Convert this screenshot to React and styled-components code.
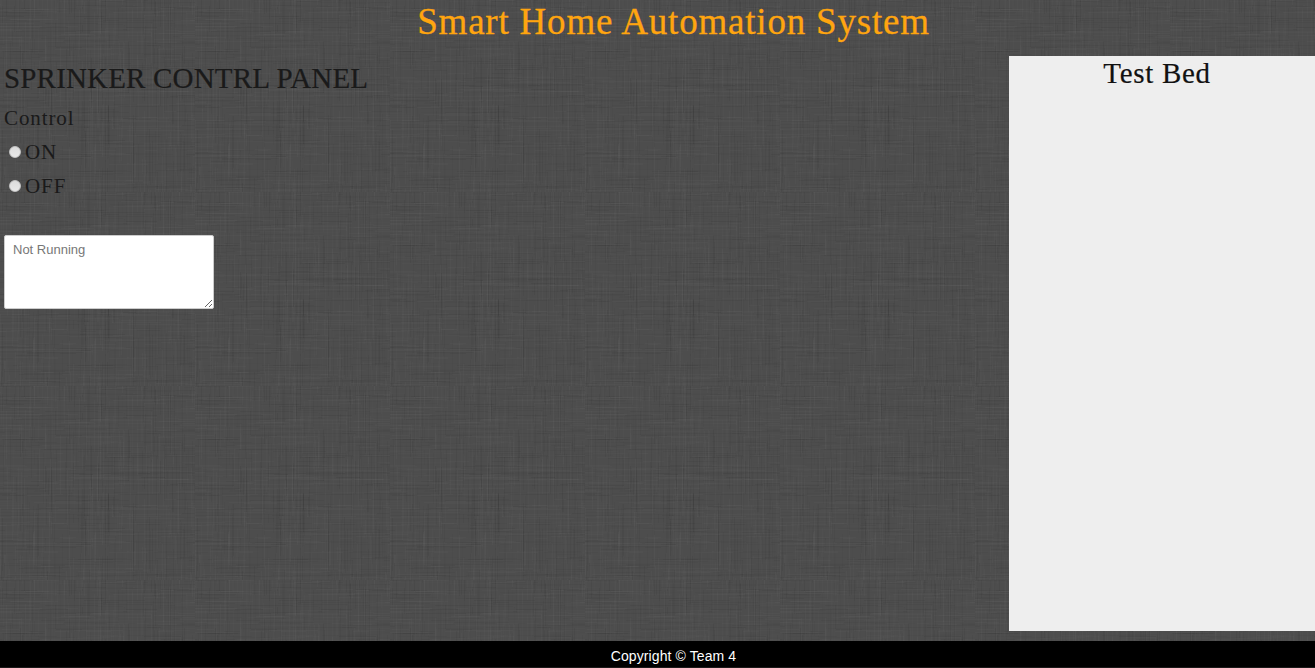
import React from "react";
import styled, { createGlobalStyle } from "styled-components";

const TILE_W = 195;
const TILE_H = 194;

// Woven linen tile: short, faint horizontal and vertical threads.
function linenTile() {
  let seed = 41;
  const rand = () => {
    seed = (seed * 16807) % 2147483647;
    return seed / 2147483647;
  };
  let threads = "";
  for (let i = 0; i < 1500; i += 1) {
    const across = i % 2 === 0;
    const length = 12 + Math.floor(rand() * 50);
    const x = Math.floor(rand() * (TILE_W + (across ? 60 : 0))) - (across ? 60 : 0);
    const y = Math.floor(rand() * (TILE_H + (across ? 0 : 60))) - (across ? 0 : 60);
    const fill = rand() < 0.5 ? "#000" : "#fff";
    const strength = fill === "#000" ? 0.045 : 0.015;
    const opacity = (0.005 + rand() * strength).toFixed(3);
    threads += `<rect x='${x}' y='${y}' width='${across ? length : 1}' height='${across ? 1 : length}' fill='${fill}' opacity='${opacity}'/>`;
  }
  const svg = `<svg xmlns='http://www.w3.org/2000/svg' width='${TILE_W}' height='${TILE_H}'><rect width='${TILE_W}' height='${TILE_H}' fill='#4d4d4d'/>${threads}</svg>`;
  return `url("data:image/svg+xml,${encodeURIComponent(svg)}")`;
}

const GlobalStyle = createGlobalStyle`
  *, *::before, *::after { box-sizing: border-box; }
  body { margin: 0; }
`;

const Page = styled.div`
  height: 668px;
  display: flex;
  flex-direction: column;
  overflow: hidden;
  background-color: #4b4b4b;
  background-image: ${linenTile()};
  background-position: 0 -2px;
  color: #1a1a1a;
  font-family: Georgia, "Liberation Serif", serif;
`;

const Header = styled.header`
  height: 56px;
  padding-left: 32px;
  text-align: center;
`;

const Title = styled.h1`
  margin: 0;
  font-size: 37px;
  font-weight: 400;
  line-height: 43px;
  letter-spacing: 0.8px;
  -webkit-text-stroke: 0.3px currentColor;
  color: #ffa50f;
`;

const Main = styled.main`
  height: 575px;
  display: flex;
  justify-content: space-between;
`;

const ControlPanel = styled.section`
  padding: 4px 0 0 4px;
`;

const PanelTitle = styled.h2`
  margin: 0;
  font-size: 29px;
  font-weight: 400;
  line-height: ${(p) => p.$line};
  letter-spacing: ${(p) => p.$spacing};
  -webkit-text-stroke: 0.2px currentColor;
  white-space: nowrap;
`;

const Controls = styled.fieldset`
  margin: 4px 0 0;
  padding: 0;
  border: 0;
  min-width: 0;
  font-size: 21px;
  line-height: 34px;
`;

const Legend = styled.div`
  letter-spacing: 0.9px;
`;

const Option = styled.label`
  display: flex;
  align-items: center;
  gap: 4px;
  padding-left: 5px;
  letter-spacing: 0.9px;
`;

const Radio = styled.input`
  appearance: none;
  flex: none;
  width: 12px;
  height: 12px;
  margin: 0;
  border: 1px solid #c4c4c4;
  border-radius: 50%;
  background: linear-gradient(#dcdcdc, #e8e8e8);

  &:checked {
    background: radial-gradient(#444 0 3px, #e4e4e4 3.5px);
  }
`;

const Status = styled.textarea`
  display: block;
  width: 210px;
  height: 74px;
  margin-top: 32px;
  padding: 6px 8px;
  border: 1px solid #ccc;
  border-radius: 2px;
  background: #fff;
  font: 13px/16px "Liberation Sans", Arial, sans-serif;

  &::placeholder {
    color: #777;
  }
`;

const TestBed = styled.aside`
  width: 306px;
  padding-right: 10px;
  background: #eee;
  color: #111;
  text-align: center;
`;

const Footer = styled.footer`
  height: 27px;
  margin-top: 10px;
  padding-left: 32px;
  border-bottom: 1px solid #1c1a1a;
  background: #000;
  color: #fff;
  font: 14px/30px "Liberation Sans", Arial, sans-serif;
  letter-spacing: 0.1px;
  text-align: center;
`;

export default function App() {
  return (
    <>
      <GlobalStyle />
      <Page>
        <Header>
          <Title>Smart Home Automation System</Title>
        </Header>
        <Main>
          <ControlPanel>
            <PanelTitle $line="37px" $spacing="0.18px">SPRINKER CONTRL PANEL</PanelTitle>
            <Controls>
              <Legend>Control</Legend>
              <Option>
                <Radio type="radio" name="sprinkler" value="on" />
                ON
              </Option>
              <Option>
                <Radio type="radio" name="sprinkler" value="off" />
                OFF
              </Option>
            </Controls>
            <Status placeholder="Not Running" />
          </ControlPanel>
          <TestBed>
            <PanelTitle $line="35px" $spacing="0.7px">Test Bed</PanelTitle>
          </TestBed>
        </Main>
        <Footer>Copyright © Team 4</Footer>
      </Page>
    </>
  );
}
